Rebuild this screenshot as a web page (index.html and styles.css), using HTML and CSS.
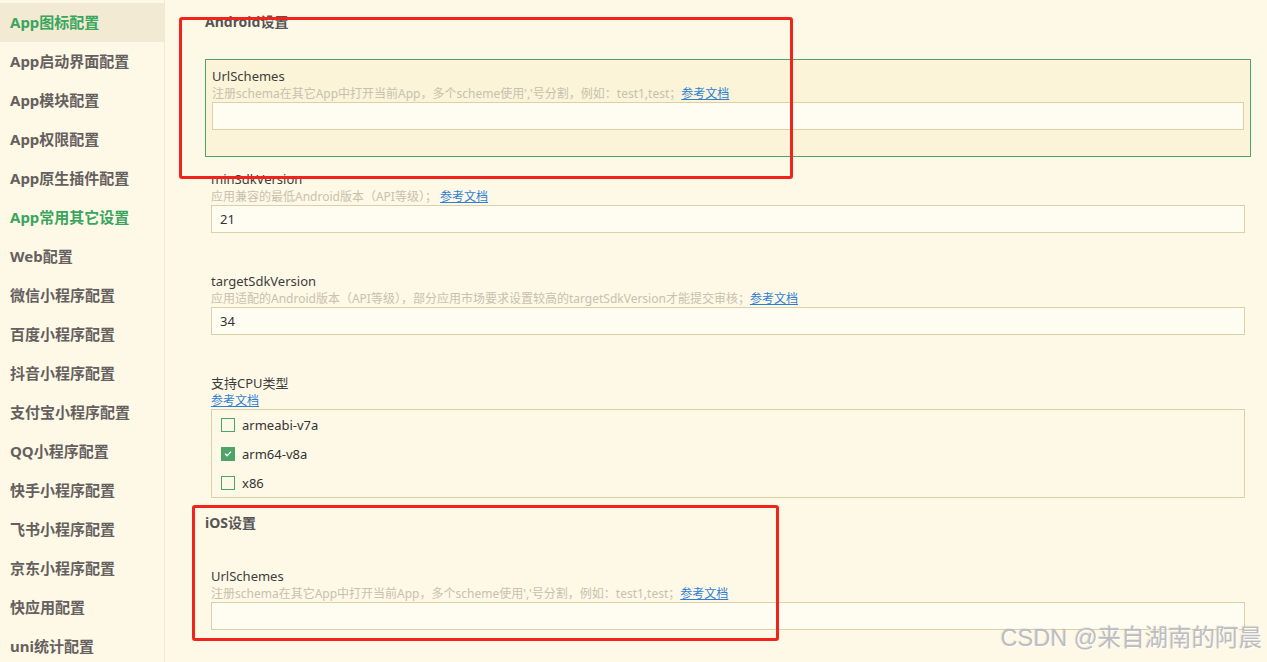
FILE: index.html
```html
<!DOCTYPE html>
<html lang="zh-CN">
<head>
<meta charset="utf-8">
<title>manifest</title>
<link rel="stylesheet" href="styles.css">
</head>
<body>
<div class="app">
  <nav class="sidebar">
    <div class="nav-item active">App图标配置</div>
    <div class="nav-item">App启动界面配置</div>
    <div class="nav-item">App模块配置</div>
    <div class="nav-item">App权限配置</div>
    <div class="nav-item">App原生插件配置</div>
    <div class="nav-item green">App常用其它设置</div>
    <div class="nav-item">Web配置</div>
    <div class="nav-item">微信小程序配置</div>
    <div class="nav-item">百度小程序配置</div>
    <div class="nav-item">抖音小程序配置</div>
    <div class="nav-item">支付宝小程序配置</div>
    <div class="nav-item">QQ小程序配置</div>
    <div class="nav-item">快手小程序配置</div>
    <div class="nav-item">飞书小程序配置</div>
    <div class="nav-item">京东小程序配置</div>
    <div class="nav-item">快应用配置</div>
    <div class="nav-item">uni统计配置</div>
  </nav>
  <main class="main">
    <h2 class="section-title">Android设置</h2>
    <div class="field field-focus">
      <div class="label">UrlSchemes</div>
      <div class="hint">注册schema在其它App中打开当前App，多个scheme使用','号分割，例如：test1,test；<a class="doc">参考文档</a></div>
      <div class="input"></div>
    </div>
    <div class="field field-first">
      <div class="label">minSdkVersion</div>
      <div class="hint">应用兼容的最低Android版本（API等级）； <a class="doc">参考文档</a></div>
      <div class="input">21</div>
    </div>
    <div class="field field-gap">
      <div class="label">targetSdkVersion</div>
      <div class="hint">应用适配的Android版本（API等级），部分应用市场要求设置较高的targetSdkVersion才能提交审核；<a class="doc">参考文档</a></div>
      <div class="input">34</div>
    </div>
    <div class="field field-gap">
      <div class="label">支持CPU类型</div>
      <div class="hint"><a class="doc">参考文档</a></div>
      <div class="check-group">
        <div class="check-row"><span class="box"></span><span>armeabi-v7a</span></div>
        <div class="check-row"><span class="box checked"><svg viewBox="0 0 13 13" width="13" height="13"><path d="M3.3 6.8 L5.6 9 L9.8 4.4" fill="none" stroke="#fff" stroke-width="1.4"/></svg></span><span>arm64-v8a</span></div>
        <div class="check-row"><span class="box"></span><span>x86</span></div>
      </div>
    </div>
    <h2 class="section-title ios">iOS设置</h2>
    <div class="field field-ios">
      <div class="label">UrlSchemes</div>
      <div class="hint">注册schema在其它App中打开当前App，多个scheme使用','号分割，例如：test1,test；<a class="doc">参考文档</a></div>
      <div class="input"></div>
    </div>
  </main>
</div>
<div class="mark mark-android"></div>
<div class="mark mark-ios"></div>
<div class="watermark">CSDN @来自湖南的阿晨</div>
</body>
</html>
```
FILE: styles.css
```css
* { box-sizing: border-box; }
html, body {
  margin: 0;
  padding: 0;
  background: #fef8e6;
  font-family: "Noto Sans", "Noto Sans CJK SC", sans-serif;
  color: #333;
  overflow: hidden;
}
.app {
  display: flex;
  height: 662px;
}
.sidebar {
  width: 165px;
  flex: none;
  padding-top: 3px;
  border-right: 1px solid #f3e9cd;
}
.nav-item {
  height: 39px;
  line-height: 39px;
  padding-left: 10px;
  font-size: 15px;
  font-weight: bold;
  color: #656060;
  white-space: nowrap;
}
.nav-item.active {
  background: #f2ead3;
  color: #3aa55e;
}
.nav-item.green { color: #3aa55e; }

.main {
  flex: 1;
  padding: 12px 16px 0 40px;
}
.section-title {
  margin: 0;
  font-size: 14px;
  font-weight: bold;
  line-height: 20px;
  color: #555;
}
.section-title.ios { margin-top: 15px; }

.field {
  padding: 0 6px;
}
.field-focus {
  margin-top: 27px;
  padding: 8px 6px 26px 6px;
  border: 1px solid #4ea468;
  background: #fbf4d8;
}
.field-first { margin-top: 14px; }
.field-gap { margin-top: 40px; }
.field-ios { margin-top: 35px; }

.label {
  font-size: 13px;
  line-height: 17px;
  color: #3d3d3d;
}
.hint {
  font-size: 12px;
  line-height: 17px;
  color: #c8c1ad;
  white-space: pre;
}
.doc {
  color: #2b7fd6;
  text-decoration: underline;
}
.input {
  height: 28px;
  border: 1px solid #ddd0a6;
  background: #fffcf2;
  font-size: 13px;
  line-height: 26px;
  padding-left: 8px;
  color: #333;
}
.check-group {
  border: 1px solid #ddd0a6;
  height: 89px;
}
.check-row {
  display: flex;
  align-items: center;
  height: 29px;
  padding-left: 9px;
  font-size: 13px;
  color: #333;
  gap: 7px;
}
.box {
  width: 14px;
  height: 14px;
  border: 1px solid #4ea468;
  display: inline-flex;
  align-items: center;
  justify-content: center;
}
.box.checked {
  background: #4ea468;
}
.box svg { display: block; }

.mark {
  position: absolute;
  border: 3px solid #f2231b;
  border-radius: 3px;
}
.mark-android { left: 179px; top: 17px; width: 614px; height: 162px; }
.mark-ios { left: 192px; top: 505px; width: 587px; height: 136px; }

.watermark {
  position: absolute;
  right: 5px;
  top: 623px;
  font-size: 23.5px;
  line-height: 30px;
  color: #bdbdbd;
  text-shadow: 1px 1px 1px #fff, -1px -1px 0 rgba(120,120,120,0.15);
  font-family: "Liberation Sans", "Noto Sans CJK SC", sans-serif;
}
```
